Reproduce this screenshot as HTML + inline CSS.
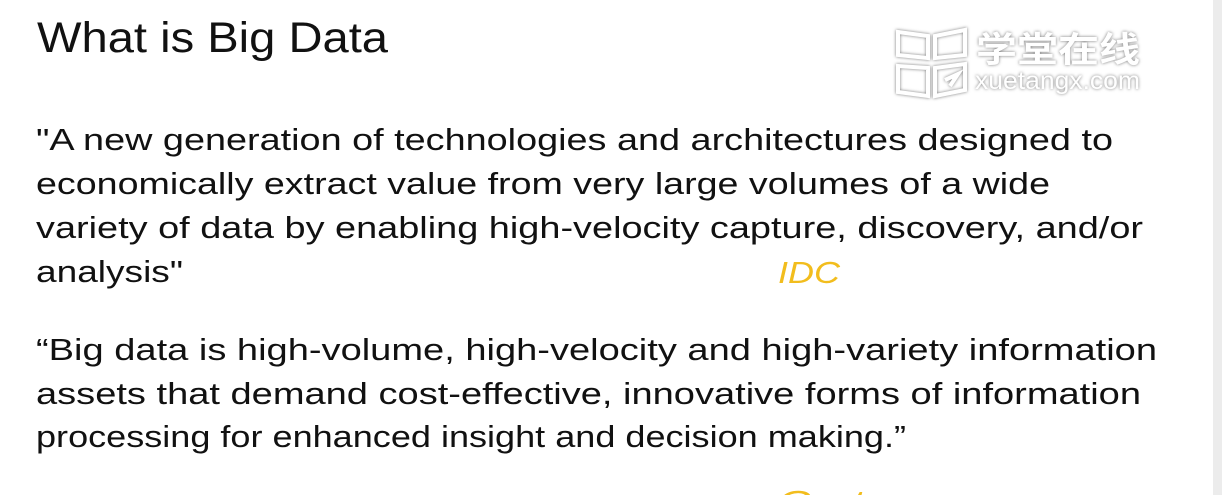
<!DOCTYPE html>
<html><head><meta charset="utf-8"><style>
html,body{margin:0;padding:0;background:#fff;width:1222px;height:495px;overflow:hidden;position:relative}
svg{position:absolute;left:0;top:0}
.strip{position:absolute;left:1213px;top:0;width:9px;height:495px;background:#ececec}
</style></head><body>
<svg width="1222" height="495" font-family="Liberation Sans, sans-serif">
<text x="37" y="52" font-size="43" fill="#111" textLength="351" lengthAdjust="spacingAndGlyphs">What is Big Data</text>
<g font-size="31" fill="#111">
<text x="36" y="150" textLength="1077" lengthAdjust="spacingAndGlyphs">"A new generation of technologies and architectures designed to</text>
<text x="36" y="194" textLength="1014" lengthAdjust="spacingAndGlyphs">economically extract value from very large volumes of a wide</text>
<text x="36" y="238" textLength="1107" lengthAdjust="spacingAndGlyphs">variety of data by enabling high-velocity capture, discovery, and/or</text>
<text x="36" y="282" textLength="147" lengthAdjust="spacingAndGlyphs">analysis"</text>
<text x="36" y="360" textLength="1121" lengthAdjust="spacingAndGlyphs">“Big data is high-volume, high-velocity and high-variety information</text>
<text x="36" y="404" textLength="1105" lengthAdjust="spacingAndGlyphs">assets that demand cost-effective, innovative forms of information</text>
<text x="36" y="447" textLength="870" lengthAdjust="spacingAndGlyphs">processing for enhanced insight and decision making.”</text>
</g>
<text x="778" y="283" font-size="31" font-style="italic" fill="#f2bd1d" textLength="62" lengthAdjust="spacingAndGlyphs">IDC</text>
<text x="778" y="512" font-size="31" font-style="italic" fill="#f2bd1d" textLength="150" lengthAdjust="spacingAndGlyphs">Gartner</text>
<g style="filter:drop-shadow(0 0 1.5px #777)">
<g fill="none" stroke="#fff" stroke-width="4">
<path d="M898 32 L928 36 L928 58 L898 55 Z M898 66 L928 68 L928 96 L898 92 Z M935 36 L965 30 L965 55 L935 58 Z M935 68 L965 64 L965 90 L935 96 Z M945 80 L958 74 L950 86"/>
</g>
<text x="976" y="62" font-family="Noto Sans CJK SC, sans-serif" font-size="35" font-weight="bold" fill="#fff" textLength="164" lengthAdjust="spacingAndGlyphs">学堂在线</text>
<text x="975" y="89" font-size="25" fill="#fff" textLength="165" lengthAdjust="spacingAndGlyphs">xuetangx.com</text>
</g>
</svg>
<div class="strip"></div>
</body></html>
